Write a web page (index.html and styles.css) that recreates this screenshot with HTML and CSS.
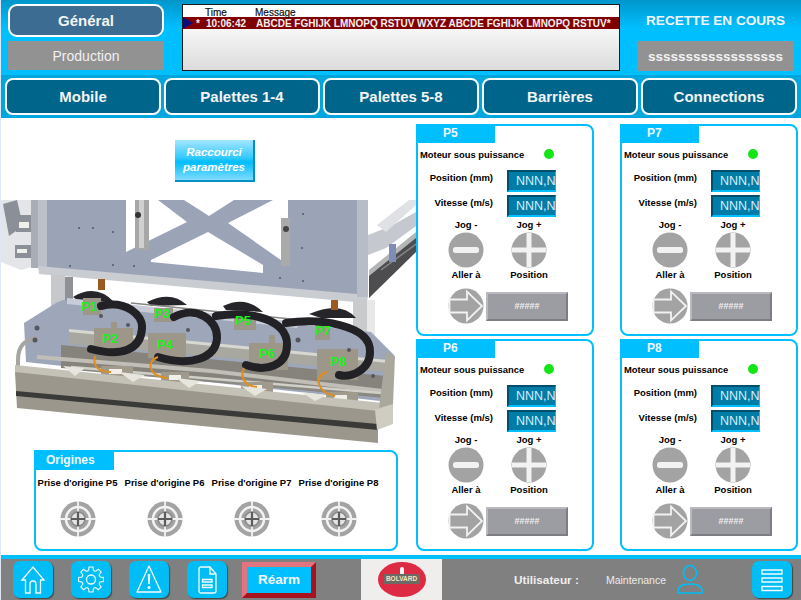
FILE: index.html
```html
<!DOCTYPE html>
<html lang="fr">
<head>
<meta charset="utf-8">
<title>Recette</title>
<link rel="stylesheet" href="styles.css">
</head>
<body>

<svg class="defs" width="0" height="0">
  <defs>
    <symbol id="i-minus" viewBox="0 0 36 36">
      <circle cx="18" cy="18" r="17.5" fill="#a3a3a3"/>
      <rect x="5" y="15" width="26" height="6" rx="2.5" fill="#f2f2f2"/>
    </symbol>
    <symbol id="i-plus" viewBox="0 0 36 36">
      <circle cx="18" cy="18" r="17.5" fill="#a3a3a3"/>
      <rect x="1" y="15.500" width="34" height="5" fill="#f2f2f2"/>
      <rect x="15.500" y="1" width="5" height="34" fill="#f2f2f2"/>
    </symbol>
    <symbol id="i-arrow" viewBox="0 0 36 36">
      <circle cx="18" cy="18" r="17.500" fill="#a3a3a3"/>
      <path d="M1.500 11.500H19V3.500L34 18 19 32.500V24.500H1.500Z" fill="none" stroke="#f2f2f2" stroke-width="1.800"/>
    </symbol>
    <symbol id="i-target" viewBox="0 0 36 36">
      <circle cx="18" cy="18" r="17.500" fill="#a3a3a3"/>
      <circle cx="18" cy="18" r="12" fill="none" stroke="#f2f2f2" stroke-width="2.500"/>
      <path d="M18 0V36M0 18H36" stroke="#f2f2f2" stroke-width="1.800"/>
      <circle cx="18" cy="18" r="7" fill="#e4e4e4" stroke="#8a8a8a" stroke-width="1.500"/>
      <path d="M18 11V25M11 18H25" stroke="#5c5c5c" stroke-width="2.200"/>
    </symbol>
    <path id="gear-seg" d="M-3-10.600-2.350-14.800H2.350L3-10.600 5.330-9.620"/>
  </defs>
</svg>

<header class="top">
  <div class="top-col">
    <button class="pill pill-general">Général</button>
    <div class="gray-box gray-prod">Production</div>
  </div>
  <div class="alarm">
    <div class="alarm-head"><span class="alarm-time">Time</span><span>Message</span></div>
    <div class="alarm-row">
      <span class="alarm-arrow"></span>
      <span class="alarm-star">*</span>
      <span class="alarm-clock">10:06:42</span>
      <span>ABCDE FGHIJK LMNOPQ RSTUV WXYZ ABCDE FGHIJK LMNOPQ RSTUV*</span>
    </div>
  </div>
  <div class="top-col top-recipe">
    <div class="recipe-title">RECETTE EN COURS</div>
    <div class="gray-box gray-recipe">ssssssssssssssssss</div>
  </div>
</header>

<nav class="tabs">
  <button class="pill">Mobile</button>
  <button class="pill">Palettes 1-4</button>
  <button class="pill">Palettes 5-8</button>
  <button class="pill">Barrières</button>
  <button class="pill">Connections</button>
</nav>

<main class="main">
  <section class="left">
    <button class="shortcut">Raccourci<br>paramètres</button>

    <svg class="machine" viewBox="0 190 415 260" width="415" height="260">
      <!-- fond gauche -->
      <path d="M0 200H37V265L20 270 0 262Z" fill="#e4e5e8"/>
      <path d="M2 204 16 200 22 226 8 236ZM15 215H30V232H15ZM14 245H30V258H14Z" fill="#8b8f98"/>
      <path d="M18 222H28V228H18ZM16 249H26V253H16Z" fill="#f0f0ea"/>
      <path d="M30 200H37V268H30Z" fill="#a9adb6"/>

      <!-- rail haut droit -->
      <path d="M367 235 390 226 415 212V226L385 248 367 255Z" fill="#c5c8ce"/>
      <path d="M385 232 415 205V200H408L376 225Z" fill="#dfe1e4"/>
      <path d="M368 272 415 236V252L368 298Z" fill="#4d4d4f"/>
      <path d="M368 270 415 232V238L368 276Z" fill="#b3b5b7"/>
      <path d="M380 270 415 244" stroke="#85878a" stroke-width="1.500"/>
      <path d="M388 244H395V262H388Z" fill="#7f8db5"/>

      <!-- plaque X -->
      <path d="M37 200H367V297L37 268Z" fill="#9ba3b7"/>
      <path d="M37 200H46V268H37Z" fill="#bcc0ca"/>
      <path d="M37 266 367 295 366 303 38 274Z" fill="#c9ccd0"/>
      <path d="M125 200H157L186 222 125 252Z" fill="#fff"/>
      <path d="M183 200H233L208 216Z" fill="#fff"/>
      <path d="M272 200H287V265L227 223Z" fill="#fff"/>
      <path d="M150 260 207 232 262 265V273L150 262Z" fill="#fff"/>
      <path d="M356 200H367V297H356Z" fill="#b8bcc6"/>
      <rect x="134" y="200" width="14" height="50" fill="#a6a8a8"/>
      <rect x="138" y="200" width="5" height="48" fill="#cfd0cf"/>
      <rect x="280" y="218" width="9" height="48" fill="#a9abaa"/>
      <circle cx="137" cy="215" r="3" fill="#333"/>
      <circle cx="285" cy="229" r="3" fill="#444"/>

      <!-- montants -->
      <rect x="50" y="275" width="14" height="65" fill="#c6c8cc"/>
      <rect x="64" y="277" width="8" height="30" fill="#8f9196"/>
      <rect x="352" y="300" width="14" height="40" fill="#c8cacb"/>
      <rect x="366" y="300" width="8" height="40" fill="#e8e8e8"/>

      <!-- bosses noires arriere -->
      <path d="M72 297Q95 283 113 302L80 303Z M146 302Q170 290 186 305L150 306Z M222 306Q245 295 262 312L225 310Z M308 314Q340 300 355 318L320 318Z" fill="#26262a"/>
      <rect x="97" y="279" width="7" height="11" fill="#9b5a22"/>
      <rect x="330" y="300" width="7" height="10" fill="#9b5a22"/>

      <!-- plaque basse -->
      <path d="M23 323 55 303 62 300 370 332 393 355 388 402 25 362Z" fill="#9ea6ba"/>
      <path d="M66 298 298 322 296 328 66 304Z" fill="#c8ccd8"/>
      <path d="M130 303 300 320" stroke="#858582" stroke-width="1.500"/>

      <!-- rails -->
      <path d="M68 329 387 360V372L68 344Z" fill="#a8a7a0"/>
      <path d="M68 329 387 360V363L68 332Z" fill="#d8d8d2"/>
      <path d="M60 345 385 376V398L60 368Z" fill="#85837c"/>

      <!-- berceaux -->
      <g fill="#9d978a">
        <path d="M82 298H100V315H82Z"/>
        <path d="M93 328H110V322H116V328H132V353H93Z"/>
        <path d="M153 308H172V322H153Z"/>
        <path d="M147 333H185V358H147Z"/>
        <path d="M233 313H255V330H233Z"/>
        <path d="M248 343H268V335H274V343H287V370H248Z"/>
        <path d="M314 323H329V340H314Z"/>
        <path d="M316 349H357V380H316Z"/>
      </g>

      <!-- chaines -->
      <g fill="none" stroke="#222226" stroke-width="8" stroke-linecap="round">
        <path d="M100 306C125 300 142 315 141 328 140 350 120 357 90 349"/>
        <path d="M173 317C195 305 217 320 216 338 215 358 190 367 157 357"/>
        <path d="M215 316C250 310 287 320 286 345 286 366 265 372 245 365"/>
        <path d="M285 323C320 318 370 325 369 352 369 370 350 378 338 375"/>
      </g>

      <!-- tiges et verins -->
      <path d="M36 357 210 371 390 392" stroke="#c0beb6" stroke-width="4" fill="none"/>
      <path d="M72 368 382 395" stroke="#8a8a82" stroke-width="4"/>
      <path d="M70 367 380 393" stroke="#d0cfc8" stroke-width="2.500"/>
      <g fill="#a09a8c">
        <rect x="100" y="366" width="32" height="11"/>
        <rect x="160" y="372" width="28" height="11"/>
        <rect x="240" y="382" width="32" height="11"/>
        <rect x="325" y="392" width="32" height="11"/>
      </g>
      <g fill="#f0efe8">
        <rect x="108" y="369" width="13" height="5"/>
        <rect x="168" y="375" width="12" height="5"/>
        <rect x="248" y="385" width="13" height="5"/>
        <rect x="333" y="395" width="13" height="5"/>
      </g>
      <g fill="none" stroke="#e08d1f" stroke-width="2">
        <path d="M94 356C91 368 100 372 110 372"/>
        <path d="M157 357C144 362 148 376 166 378"/>
        <path d="M243 368C238 380 246 386 256 387"/>
        <path d="M326 372C312 376 316 392 334 396"/>
      </g>

      <!-- poutre -->
      <path d="M36 338C24 340 17 345 17 360V368" fill="none" stroke="#a5a5a2" stroke-width="4"/>
      <path d="M14 365 392 404V413L14 376Z" fill="#c4c1b6"/>
      <path d="M14 372 377 411V443L16 408Z" fill="#9b978d"/>
      <path d="M15 391 377 424V430L15 396Z" fill="#3a3a38"/>
      <path d="M374 410 392 404V424L376 430Z" fill="#cfccc2"/>
      <path d="M385 353 394 356 392 404 378 408Z" fill="#aaa79d"/>
      <path d="M62 366 84 368 74 376ZM118 372 144 375 132 382ZM175 378 200 381 188 388ZM240 386 266 389 254 396ZM300 392 326 395 314 401Z" fill="#e6e5de"/>

      <!-- vis -->
      <g fill="#55575c">
        <circle cx="78" cy="228" r="1"/><circle cx="92" cy="228" r="1"/><circle cx="112" cy="232" r="1"/>
        <circle cx="69" cy="266" r="1"/><circle cx="112" cy="265" r="1"/><circle cx="133" cy="266" r="1"/>
        <circle cx="302" cy="214" r="1"/><circle cx="301" cy="248" r="1"/><circle cx="302" cy="281" r="1"/><circle cx="279" cy="278" r="1"/>
        <circle cx="36" cy="328" r="2.500"/><circle cx="127" cy="325" r="2"/><circle cx="187" cy="330" r="2"/><circle cx="297" cy="340" r="2.500"/><circle cx="34" cy="340" r="2.500"/>
        <circle cx="100" cy="316" r="2"/><circle cx="348" cy="350" r="2"/><circle cx="372" cy="376" r="2"/>
      </g>

      <g class="machine-label">
        <text x="88" y="311">P1</text>
        <text x="109" y="343">P2</text>
        <text x="161" y="318">P3</text>
        <text x="164" y="349">P4</text>
        <text x="242" y="325">P5</text>
        <text x="266" y="358">P6</text>
        <text x="322" y="335">P7</text>
        <text x="337" y="366">P8</text>
      </g>
    </svg>

    <div class="origins">
      <div class="panel-tab">Origines</div>
      <div class="origins-grid">
        <div class="origin"><span>Prise d'origine P5</span><svg class="ico"><use href="#i-target"/></svg></div>
        <div class="origin"><span>Prise d'origine P6</span><svg class="ico"><use href="#i-target"/></svg></div>
        <div class="origin"><span>Prise d'origine P7</span><svg class="ico"><use href="#i-target"/></svg></div>
        <div class="origin"><span>Prise d'origine P8</span><svg class="ico"><use href="#i-target"/></svg></div>
      </div>
    </div>
  </section>

  <section class="panels">
    <div class="panel">
      <div class="panel-tab">P5</div>
      <div class="motor"><span>Moteur sous puissance</span><i class="led"></i></div>
      <div class="field"><label>Position (mm)</label><div class="num">NNN,N</div></div>
      <div class="field"><label>Vitesse (m/s)</label><div class="num">NNN,N</div></div>
      <div class="jog">
        <span>Jog -</span><span>Jog +</span>
        <svg class="ico"><use href="#i-minus"/></svg><svg class="ico"><use href="#i-plus"/></svg>
        <span>Aller à</span><span>Position</span>
      </div>
      <div class="goto"><svg class="ico"><use href="#i-arrow"/></svg><button class="hash">#####</button></div>
    </div>

    <div class="panel">
      <div class="panel-tab">P7</div>
      <div class="motor"><span>Moteur sous puissance</span><i class="led"></i></div>
      <div class="field"><label>Position (mm)</label><div class="num">NNN,N</div></div>
      <div class="field"><label>Vitesse (m/s)</label><div class="num">NNN,N</div></div>
      <div class="jog">
        <span>Jog -</span><span>Jog +</span>
        <svg class="ico"><use href="#i-minus"/></svg><svg class="ico"><use href="#i-plus"/></svg>
        <span>Aller à</span><span>Position</span>
      </div>
      <div class="goto"><svg class="ico"><use href="#i-arrow"/></svg><button class="hash">#####</button></div>
    </div>

    <div class="panel">
      <div class="panel-tab">P6</div>
      <div class="motor"><span>Moteur sous puissance</span><i class="led"></i></div>
      <div class="field"><label>Position (mm)</label><div class="num">NNN,N</div></div>
      <div class="field"><label>Vitesse (m/s)</label><div class="num">NNN,N</div></div>
      <div class="jog">
        <span>Jog -</span><span>Jog +</span>
        <svg class="ico"><use href="#i-minus"/></svg><svg class="ico"><use href="#i-plus"/></svg>
        <span>Aller à</span><span>Position</span>
      </div>
      <div class="goto"><svg class="ico"><use href="#i-arrow"/></svg><button class="hash">#####</button></div>
    </div>

    <div class="panel">
      <div class="panel-tab">P8</div>
      <div class="motor"><span>Moteur sous puissance</span><i class="led"></i></div>
      <div class="field"><label>Position (mm)</label><div class="num">NNN,N</div></div>
      <div class="field"><label>Vitesse (m/s)</label><div class="num">NNN,N</div></div>
      <div class="jog">
        <span>Jog -</span><span>Jog +</span>
        <svg class="ico"><use href="#i-minus"/></svg><svg class="ico"><use href="#i-plus"/></svg>
        <span>Aller à</span><span>Position</span>
      </div>
      <div class="goto"><svg class="ico"><use href="#i-arrow"/></svg><button class="hash">#####</button></div>
    </div>
  </section>
</main>

<footer class="foot">
  <button class="foot-btn">
    <svg viewBox="0 0 40 37"><path d="M9 19 20 6 31 19H27.500V32H23V23C23 19 17 19 17 23V32H12.500V19Z"/></svg>
  </button>
  <button class="foot-btn">
    <svg viewBox="0 0 40 37">
      <g transform="translate(20 18.500) scale(.84)">
        <use href="#gear-seg"/>
        <use href="#gear-seg" transform="rotate(45)"/>
        <use href="#gear-seg" transform="rotate(90)"/>
        <use href="#gear-seg" transform="rotate(135)"/>
        <use href="#gear-seg" transform="rotate(180)"/>
        <use href="#gear-seg" transform="rotate(225)"/>
        <use href="#gear-seg" transform="rotate(270)"/>
        <use href="#gear-seg" transform="rotate(315)"/>
      </g>
      <circle cx="20" cy="18.500" r="4.500"/>
    </svg>
  </button>
  <button class="foot-btn foot-warn">
    <svg viewBox="0 0 40 37">
      <path d="M20 5 32 31H8Z" stroke-linejoin="round"/>
      <path class="fill" d="M18.800 13H21.200L20.800 23H19.200Z"/>
      <circle class="fill" cx="20" cy="26.500" r="1.500"/>
    </svg>
  </button>
  <button class="foot-btn foot-doc">
    <svg viewBox="0 0 40 37">
      <path d="M12 8Q12 6 14 6H23L29 13V30Q29 32 27 32H14Q12 32 12 30Z"/>
      <path d="M23 6V13H29"/>
      <path d="M15.500 18.500H25V21H15.500ZM15.500 24H25V26.500H15.500Z"/>
    </svg>
  </button>
  <button class="rearm">Réarm</button>
  <div class="logo">
    <div class="logo-oval">
      <i class="logo-pawn"></i>
      <span class="logo-text">BOLVARD</span>
    </div>
  </div>
  <span class="user-title">Utilisateur :</span>
  <span class="user-name">Maintenance</span>
  <svg class="user-ico" viewBox="0 0 28 32">
    <ellipse cx="14" cy="9" rx="6.500" ry="7.500"/>
    <path d="M2 29V27C2 22 7 20 14 20S26 22 26 27V29Z"/>
  </svg>
  <button class="foot-btn foot-menu">
    <svg viewBox="0 0 40 37">
      <path d="M10 9H30V13H10ZM10 17H30V21H10ZM10 25.500H30V29.500H10Z"/>
    </svg>
  </button>
</footer>

</body>
</html>
```

FILE: styles.css
```css
* {
  box-sizing: border-box;
}
html, body {
  margin: 0;
  height: 600px;
  overflow: hidden;
}
body {
  width: 801px;
  padding-left: 1px;
  background: #dfe6f6;
  font-family: "Liberation Sans", Arial, sans-serif;
  font-size: 10px;
  font-weight: bold;
  color: #000;
}
button {
  font: inherit;
  padding: 0;
  cursor: pointer;
}
.defs {
  position: absolute;
}

/* haut */
.top {
  display: flex;
  height: 75px;
  padding: 4px 0 0 7px;
  background: linear-gradient(#0096ca, #00bfff 38%);
}
.top-col {
  display: flex;
  flex-direction: column;
  width: 156px;
}
.pill {
  background: #00658a;
  border: 2px solid #fff;
  border-radius: 9px;
  color: #f4f4f4;
  font-size: 15px;
  font-weight: bold;
}
.pill-general {
  height: 33px;
  background: #3c6c92;
}
.gray-box {
  display: flex;
  align-items: center;
  justify-content: center;
  background: #929292;
}
.gray-prod {
  height: 29px;
  margin-top: 4px;
  color: #f0f0f0;
  font-size: 14px;
  font-weight: normal;
}
.alarm {
  width: 438px;
  height: 67px;
  margin-left: 18px;
  border: 1px solid #1c1c1c;
  background: linear-gradient(#fff 15px, #f2f2f2 30px, #dcdcdc);
  font-size: 10px;
}
.alarm-head {
  display: flex;
  height: 12px;
  line-height: 15px;
  padding-left: 22px;
  font-weight: normal;
  color: #111;
  -webkit-text-stroke: .2px #111;
}
.alarm-time {
  width: 50px;
}
.alarm-row {
  display: flex;
  align-items: center;
  height: 12px;
  background: #800000;
  color: #f6eeee;
  white-space: nowrap;
}
.alarm-arrow {
  width: 0;
  height: 0;
  border-left: 10px solid #0a0a80;
  border-top: 6px solid transparent;
  border-bottom: 6px solid transparent;
}
.alarm-star {
  width: 13px;
  padding-left: 3px;
}
.alarm-clock {
  width: 50px;
}
.top-recipe {
  width: 157px;
  margin-left: 17px;
}
.recipe-title {
  height: 37px;
  padding-top: 9px;
  text-align: center;
  font-size: 13.600px;
  color: #f0f6fa;
}
.gray-recipe {
  height: 30px;
  color: #f2f2f2;
  font-size: 13.500px;
}

/* onglets */
.tabs {
  display: flex;
  gap: 3px;
  height: 43px;
  padding: 3px 0 3px 4px;
  background: #00a6de;
}
.tabs .pill {
  width: 156px;
  height: 37px;
  border-radius: 8px;
}

/* centre */
.main {
  display: flex;
  height: 437px;
  background: #fff;
}
.left {
  width: 415px;
  padding-top: 22px;
}
.shortcut {
  display: block;
  width: 80px;
  height: 42px;
  margin-left: 174px;
  border: 0;
  border-right: 2px solid #0090c2;
  border-bottom: 2px solid #0090c2;
  background: linear-gradient(#a5e6ff, #2fc9ff 45%, #00bdfd 55%, #7fdcff);
  color: #fff;
  font-size: 11.500px;
  font-style: italic;
  line-height: 15px;
}
.machine {
  display: block;
  margin-top: 8px;
}
.machine-label text {
  fill: #1fee1f;
  font-size: 13px;
  font-weight: bold;
  text-anchor: middle;
}
.panel-tab {
  width: 79px;
  height: 19px;
  margin: -1px 0 0 -1px;
  background: #00bfff;
  color: #f2f8fc;
  font-size: 12px;
  line-height: 18px;
  padding-left: 11px;
}
.origins {
  width: 364px;
  height: 101px;
  margin-left: 33px;
  border: 2px solid #00bfff;
  border-radius: 0 8px 8px 8px;
}
.origins-grid {
  display: grid;
  grid-template-columns: repeat(4, 87px);
  margin-left: -2px;
  padding-top: 7px;
}
.origin {
  display: flex;
  flex-direction: column;
  align-items: center;
  gap: 12px;
  font-size: 9.500px;
  line-height: 12px;
  white-space: nowrap;
}
.ico {
  display: block;
  width: 36px;
  height: 36px;
}

.panels {
  display: grid;
  grid-template-columns: 178px 178px;
  grid-template-rows: 212px 212px;
  column-gap: 26px;
  row-gap: 3px;
  padding-top: 6px;
}
.panel {
  border: 2px solid #00bfff;
  border-radius: 0 8px 8px 8px;
}
.panel .panel-tab {
  margin: -2px 0 0 -2px;
  padding-left: 27px;
}
.motor {
  display: flex;
  align-items: center;
  justify-content: space-between;
  height: 22px;
  margin-bottom: 2px;
  padding: 0 38px 0 2px;
  font-size: 9.400px;
}
.led {
  width: 10px;
  height: 10px;
  border-radius: 50%;
  background: #14e514;
}
.field {
  display: flex;
  gap: 14px;
  height: 25px;
  padding-top: 3px;
}
.field label {
  width: 75px;
  padding-top: 2px;
  text-align: right;
  font-size: 9.500px;
  line-height: 11px;
}
.num {
  width: 49px;
  height: 22px;
  padding-left: 7px;
  background: #007ca7;
  border-top: 2px solid #004f6e;
  border-left: 2px solid #004f6e;
  border-right: 1px solid #00bfff;
  border-bottom: 2px solid #00bfff;
  color: #d6efff;
  font-size: 12.500px;
  font-weight: normal;
  line-height: 19px;
  white-space: nowrap;
}
.jog {
  display: grid;
  grid-template-columns: 36px 36px;
  column-gap: 27px;
  justify-items: center;
  margin: 1px 0 0 30px;
  font-size: 9.500px;
  line-height: 13px;
  white-space: nowrap;
}
.jog .ico {
  margin-top: 1px;
}
.goto {
  display: flex;
  align-items: center;
  gap: 2px;
  margin: 7px 0 0 30px;
}
.hash {
  width: 82px;
  height: 29px;
  border: 2px solid;
  border-color: #b9b9bf #7d7d83 #7d7d83 #b9b9bf;
  background: #9c9ca3;
  color: #f0f0f0;
  font-size: 9px;
}

/* bas */
.foot {
  display: flex;
  align-items: center;
  height: 45px;
  border-top: 4px solid #00bfff;
  background: #808080;
}
.foot-btn {
  flex: none;
  width: 40px;
  height: 37px;
  margin-left: 18px;
  border: 0;
  border-radius: 7px;
  background: #00bdf6;
  box-shadow: 1px 1px 1px #444;
}
.foot-btn:first-child {
  margin-left: 12px;
}
.foot-btn svg {
  display: block;
  width: 40px;
  height: 37px;
  fill: none;
  stroke: #f4fbff;
  stroke-width: 1.300;
}
.foot-btn svg .fill {
  fill: #f4fbff;
  stroke: none;
}
.rearm {
  flex: none;
  width: 74px;
  height: 36px;
  margin-left: 15px;
  border: 5px solid;
  border-color: #e0757f #a8121f #a8121f #e0757f;
  background: #00bfff;
  color: #f4f8fc;
  font-size: 13.500px;
  font-weight: bold;
}
.logo {
  display: flex;
  align-items: center;
  justify-content: center;
  flex: none;
  width: 81px;
  height: 41px;
  margin-left: 45px;
  background: #f0eeec;
}
.logo-oval {
  display: flex;
  flex-direction: column;
  align-items: center;
  width: 48px;
  height: 35px;
  padding-top: 5px;
  border-radius: 50%;
  background: #dc2b42;
}
.logo-pawn {
  width: 4px;
  height: 7px;
  border-radius: 2px 2px 0 0;
  background: #f4f4f4;
}
.logo-text {
  width: 36px;
  height: 10px;
  background: #6d6a66;
  color: #f4e9c0;
  font-size: 6.500px;
  line-height: 10px;
  text-align: center;
}
.user-title {
  margin-left: 72px;
  font-size: 11.800px;
  color: #efefef;
  white-space: nowrap;
}
.user-name {
  margin-left: 27px;
  font-size: 10.500px;
  font-weight: normal;
  color: #ececec;
}
.user-ico {
  flex: none;
  width: 28px;
  height: 32px;
  margin-left: 10px;
  fill: none;
  stroke: #00bdf6;
  stroke-width: 1.700;
}
.foot-menu {
  margin-left: 48px;
}
```
